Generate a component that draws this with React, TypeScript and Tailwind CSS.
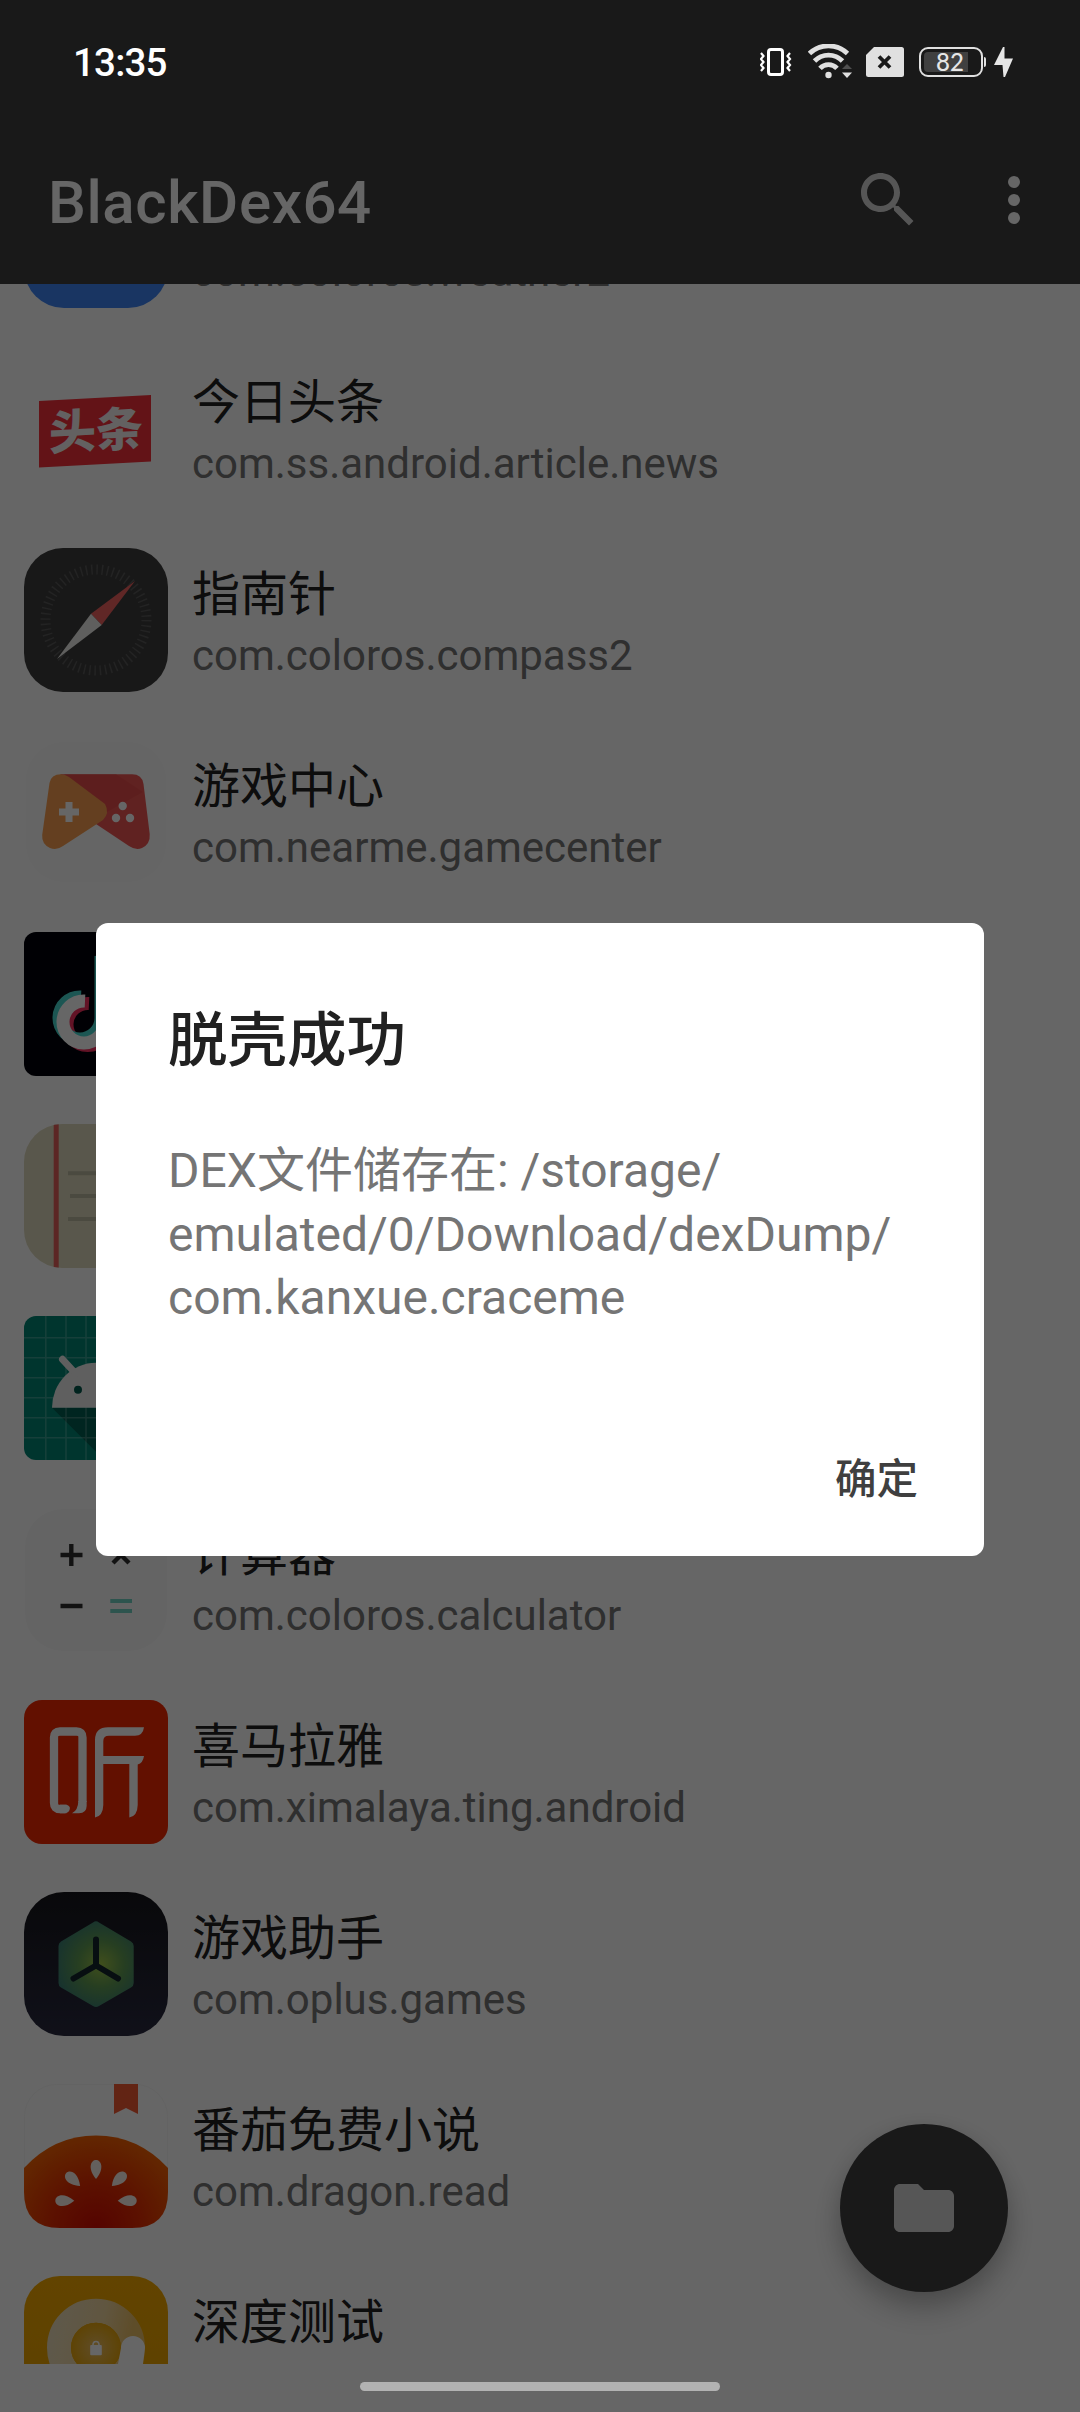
import type { ReactNode } from "react";

const iconClass = "block size-36 shrink-0";

function WeatherIcon() {
  return (
    <svg viewBox="0 0 144 144" className={iconClass}>
      <rect width="144" height="144" rx="40" fill="#4086f5" />
    </svg>
  );
}

function ToutiaoIcon() {
  return (
    <svg viewBox="0 0 144 144" className={iconClass}>
      <path d="M15 45 127 39V105.500L15 111.500Z" fill="#f8303a" />
      <text
        x="72"
        y="91.500"
        textAnchor="middle"
        transform="translate(0 3.800) skewY(-3)"
        className="font-['Noto_Sans_CJK_SC',sans-serif] text-[47px] font-black"
        fill="#f8f2f2"
      >
        头条
      </text>
    </svg>
  );
}

function CompassIcon() {
  return (
    <svg viewBox="0 0 144 144" className={iconClass}>
      <rect width="144" height="144" rx="39" fill="#3d3d3d" />
      <circle cx="72" cy="72" r="50.500" fill="none" stroke="#585858" strokeWidth="10" strokeDasharray="1.500 3.788" />
      <path d="M111 33 67 65.700 77.700 77Z" fill="#f06260" />
      <path d="M33 111 67 65.700 77.700 77Z" fill="#eeeeea" />
    </svg>
  );
}

function GameCenterIcon() {
  return (
    <svg viewBox="0 0 144 144" className={iconClass}>
      <rect x="2" y="2" width="140" height="140" rx="38" fill="#fcfcfc" />
      <path
        d="M37 34.300H108Q118 34.300 119.500 44L125.700 94Q126.500 104 118 108Q111.500 110.500 105 106L72 84 30 40Z"
        fill="#f05654"
      />
      <path d="M40 34.300H92L119 52 83 72Z" fill="#e44744" opacity=".55" />
      <path
        d="M37 34.300Q27 34.500 25.500 43L18.200 95Q17.500 104 26 108Q33 110.500 39 106L79 80Q86 73 81 64L45 37Q41 34.300 37 34.300Z"
        fill="#fa9f50"
      />
      <path d="M35 72H55M45 62V82" stroke="#fff" strokeWidth="7" />
      <circle cx="98.700" cy="66" r="4.200" fill="#fff" />
      <circle cx="92" cy="78" r="4.200" fill="#fff" />
      <circle cx="106" cy="78" r="4.200" fill="#fff" />
    </svg>
  );
}

function TiktokIcon() {
  const note = "M61 69A21 21 0 1 0 81 90V28Q84 46 106 50";
  return (
    <svg viewBox="0 0 144 144" className={iconClass}>
      <rect width="144" height="144" rx="12" fill="#02020a" />
      <g fill="none" strokeWidth="13">
        <path d={note} stroke="#f5305f" transform="translate(4 2.500)" />
        <path d={note} stroke="#48d8cf" transform="translate(-4 -4)" />
        <path d={note} stroke="#fff" />
      </g>
    </svg>
  );
}

function NotesIcon() {
  return (
    <svg viewBox="0 0 144 144" className={iconClass}>
      <defs>
        <clipPath id="notes-clip">
          <rect width="144" height="144" rx="38" />
        </clipPath>
      </defs>
      <g clipPath="url(#notes-clip)">
        <rect width="144" height="144" fill="#dfdabd" />
        <rect x="29.700" width="5" height="144" fill="#e5605a" />
        <path d="M44 49.300H112M46 72H112M44 95H112" stroke="#bcb8a0" strokeWidth="4" />
      </g>
    </svg>
  );
}

function AndroidIcon() {
  return (
    <svg viewBox="0 0 144 144" className={iconClass}>
      <defs>
        <clipPath id="android-clip">
          <rect width="144" height="144" rx="12" />
        </clipPath>
      </defs>
      <g clipPath="url(#android-clip)">
        <rect width="144" height="144" fill="#008573" />
        <path d="M28 91.700 80.300 144H144V119L116 91.700Z" fill="#005c50" />
        <path
          d="M21.800 0V144M42 0V144M62 0V144M82 0V144M102 0V144M122 0V144M0 21.700H144M0 41.700H144M0 61.700H144M0 81.700H144M0 101.700H144M0 121.700H144"
          stroke="#fff"
          strokeOpacity=".22"
          strokeWidth="1.500"
        />
        <path d="M28 91.700A44 45 0 0 1 116 91.700Z" fill="#ededed" />
        <path d="M38.500 43.300 52 58M105.500 43.300 92 58" stroke="#ededed" strokeWidth="7" strokeLinecap="round" />
        <circle cx="54" cy="73.700" r="4" fill="#00574b" />
        <circle cx="90" cy="73.700" r="4" fill="#00574b" />
      </g>
    </svg>
  );
}

function CalculatorIcon() {
  return (
    <svg viewBox="0 0 144 144" className={iconClass}>
      <rect x="1" y="1" width="142" height="142" rx="38" fill="#fbfbfb" />
      <path d="M36.500 47H58.500M47.300 36V58M36.500 98H58.500" stroke="#2e2e2e" strokeWidth="4.400" />
      <path d="M89 39 105 55M105 39 89 55" stroke="#2e2e2e" strokeWidth="4.400" />
      <path d="M86.300 93H108M86.300 103H108" stroke="#70d2c4" strokeWidth="4" />
    </svg>
  );
}

function XimalayaIcon() {
  return (
    <svg viewBox="0 0 144 144" className={iconClass}>
      <rect width="144" height="144" rx="18" fill="#f52800" />
      <path
        d="M42.500 109H36Q30 109 30 103V37.500Q30 31.500 36 31.500H52.500Q58.500 31.500 58.500 37.500V102"
        fill="none"
        stroke="#fff"
        strokeWidth="8.300"
      />
      <path d="M36 104.800H42.500Q46.500 106 45.800 109Q45 113 41 113.200H36Z" fill="#fff" />
      <path d="M54.350 101H62.650V106Q62.500 113.300 55 113.300H48Q54 110.500 54.350 101Z" fill="#fff" />
      <path
        d="M71 117.600V40Q71 27.300 84 27.300H120Q119 35.700 111 35.700H85Q79.300 35.700 79.300 41V56H120Q119 63 113.700 64.500V105Q113.500 116 105.300 117.600V64H79.300V105Q79 116 71 117.600Z"
        fill="#fff"
      />
    </svg>
  );
}

function GameAssistantIcon() {
  return (
    <svg viewBox="0 0 144 144" className={iconClass}>
      <defs>
        <linearGradient id="assist-bg" x2="0" y2="1">
          <stop stopColor="#16161b" />
          <stop offset="1" stopColor="#292a40" />
        </linearGradient>
        <radialGradient id="assist-hex" gradientUnits="userSpaceOnUse" cx="77" cy="72" r="46">
          <stop stopColor="#a0c448" />
          <stop offset=".5" stopColor="#609c54" />
          <stop offset="1" stopColor="#3c8074" />
        </radialGradient>
      </defs>
      <rect width="144" height="144" rx="40" fill="url(#assist-bg)" />
      <path
        d="M69 30.500Q72 28 75 30.500L107 49.500Q109.700 51 109.700 54V91Q109.700 94 107 95.500L75 114Q72 115.800 69 114L37 95.500Q34.500 94 34.500 91V54Q34.500 51 37 49.500Z"
        fill="url(#assist-hex)"
      />
      <path
        d="M72 47.500V73.500L49.500 86.500M72 73.500 94 86.500"
        fill="none"
        stroke="#12232c"
        strokeWidth="6"
        strokeLinecap="round"
        strokeLinejoin="round"
      />
    </svg>
  );
}

function TomatoIcon() {
  return (
    <svg viewBox="0 0 144 144" className={iconClass}>
      <defs>
        <radialGradient id="tomato-fill" gradientUnits="userSpaceOnUse" cx="72" cy="144" r="100">
          <stop stopColor="#d40a00" />
          <stop offset=".45" stopColor="#e52c00" />
          <stop offset="1" stopColor="#f96a04" />
        </radialGradient>
      </defs>
      <rect x=".5" y=".5" width="143" height="143" rx="32" fill="#fff" stroke="#f8f8f8" />
      <path d="M90 0H114V30L102 24 90 30Z" fill="#f65a34" />
      <path d="M0 84Q30 51.500 72 51.500T144 84V108Q144 144 108 144H36Q0 144 0 108Z" fill="url(#tomato-fill)" />
      <g fill="#faf0e8">
        {[-90, -47, 0, 47, 90].map((angle) => (
          <path key={angle} d="M72 95C63 84 67 76 72 76S81 84 72 95Z" transform={`rotate(${angle} 72 116.700)`} />
        ))}
      </g>
    </svg>
  );
}

function TestIcon() {
  return (
    <svg viewBox="0 0 144 144" className={iconClass}>
      <defs>
        <linearGradient id="test-ring" x2="1" y2=".2">
          <stop stopColor="#ecdcb8" />
          <stop offset=".6" stopColor="#f0d7a0" />
          <stop offset="1" stopColor="#ecc068" />
        </linearGradient>
        <radialGradient id="test-core">
          <stop stopColor="#eec066" />
          <stop offset="1" stopColor="#eba80c" />
        </radialGradient>
        <linearGradient id="test-bg" x2="0" y2="1">
          <stop stopColor="#f5aa00" />
          <stop offset="1" stopColor="#e8a200" />
        </linearGradient>
      </defs>
      <rect width="144" height="144" rx="36" fill="url(#test-bg)" />
      <circle cx="72" cy="71.700" r="37" fill="none" stroke="url(#test-ring)" strokeWidth="24" />
      <circle cx="72" cy="71.700" r="25" fill="url(#test-core)" />
      <path d="M97 72A12 12 0 0 1 121 72L119 88H94Z" fill="#fff" />
      <rect x="66.200" y="69" width="11.600" height="10.200" rx="1" fill="#fff" />
      <path d="M69 69A3 3.500 0 0 1 75 69" fill="none" stroke="#fff" strokeWidth="1.600" />
    </svg>
  );
}

const apps: { name: string; pkg: string; icon: ReactNode }[] = [
  { name: "天气", pkg: "com.coloros.weather2", icon: <WeatherIcon /> },
  { name: "今日头条", pkg: "com.ss.android.article.news", icon: <ToutiaoIcon /> },
  { name: "指南针", pkg: "com.coloros.compass2", icon: <CompassIcon /> },
  { name: "游戏中心", pkg: "com.nearme.gamecenter", icon: <GameCenterIcon /> },
  { name: "抖音", pkg: "com.ss.android.ugc.aweme", icon: <TiktokIcon /> },
  { name: "便签", pkg: "com.coloros.note", icon: <NotesIcon /> },
  { name: "craceme", pkg: "com.kanxue.craceme", icon: <AndroidIcon /> },
  { name: "计算器", pkg: "com.coloros.calculator", icon: <CalculatorIcon /> },
  { name: "喜马拉雅", pkg: "com.ximalaya.ting.android", icon: <XimalayaIcon /> },
  { name: "游戏助手", pkg: "com.oplus.games", icon: <GameAssistantIcon /> },
  { name: "番茄免费小说", pkg: "com.dragon.read", icon: <TomatoIcon /> },
  { name: "深度测试", pkg: "com.coloros.deeptesting", icon: <TestIcon /> },
];

function AppRow({ name, pkg, icon }: { name: string; pkg: string; icon: ReactNode }) {
  return (
    <li className="flex h-48 shrink-0 items-center gap-6 px-6">
      {icon}
      <div className="flex h-36 flex-col whitespace-nowrap pt-[15px]">
        <span className="h-16 text-[48px] leading-16 text-[#212121]">{name}</span>
        <span className="h-14 text-[42px] leading-[57px] text-[#757575]">{pkg}</span>
      </div>
    </li>
  );
}

function AppBar() {
  return (
    <header className="flex h-[284px] shrink-0 items-center bg-[#3f3f3f] pt-[116px] pr-[30px] pl-12">
      <h1 className="flex-1 pt-[5px] text-[60px] leading-none font-medium tracking-[0.6px] text-white">BlackDex64</h1>
      <svg viewBox="0 0 24 24" className="mr-[54px] size-[72px]" fill="#d8d8d8">
        <path d="M15.500 14h-.79l-.28-.27C15.410 12.590 16 11.110 16 9.500 16 5.910 13.090 3 9.500 3S3 5.910 3 9.500 5.910 16 9.500 16c1.610 0 3.090-.59 4.230-1.570l.27.280v.790l5 4.990L20.490 19l-4.990-5zm-6 0C7.010 14 5 11.990 5 9.500S7.010 5 9.500 5 14 7.010 14 9.500 11.990 14 9.500 14z" />
      </svg>
      <svg viewBox="0 0 24 24" className="size-[72px]" fill="#fff">
        <circle cx="12" cy="6" r="2" />
        <circle cx="12" cy="12" r="2" />
        <circle cx="12" cy="18" r="2" />
      </svg>
    </header>
  );
}

function StatusBar() {
  return (
    <div className="flex h-[116px] shrink-0 items-start pl-[73px] pr-[66px]">
      <span className="mt-[41px] flex-1 text-[38.500px] leading-[44px] font-medium tracking-[-0.800px] text-white">13:35</span>
      <svg viewBox="0 0 32 34" className="mt-11 h-[34px] w-8" fill="none" stroke="#fff">
        <rect x="8.500" y="5.500" width="14" height="25" rx="2.500" strokeWidth="3" />
        <path d="M1 9 3.500 12 1 15 3.500 18 1 21 3.500 24 1 27M30 9 27.500 12 30 15 27.500 18 30 21 27.500 24 30 27" strokeWidth="2.200" />
      </svg>
      <svg viewBox="0 0 45 35" className="mt-11 ml-4 h-[35px] w-[45px]" fill="none">
        <g stroke="#e0e0e0" strokeWidth="4.800">
          <path d="M1.500 10.300A27.500 27.500 0 0 1 39.500 10.300" transform="translate(0 -.8)" />
          <path d="M6.500 17A19.500 19.500 0 0 1 34.500 17" />
          <path d="M12 24.300A11.500 11.500 0 0 1 29 24.300" />
        </g>
        <circle cx="20.500" cy="31" r="3.200" fill="#e0e0e0" />
        <path d="M34 25 39 20 44 25Z" fill="#505050" />
        <path d="M34 28.500H44L39 34Z" fill="#e0e0e0" />
      </svg>
      <svg viewBox="0 0 38 30" className="mt-[47px] ml-[13px] h-[30px] w-[38px]">
        <path d="M8 0H35.500Q38 0 38 2.500V27.500Q38 30 35.500 30H2.500Q0 30 0 27.500V8Z" fill="#e0e0e0" />
        <path d="M13 9.500 24 20.500M24 9.500 13 20.500" stroke="#191919" strokeWidth="3.800" />
      </svg>
      <div className="mt-[47px] ml-[15px] flex h-[30px] items-center gap-px">
        <div className="relative flex h-[30px] w-16 items-center justify-center rounded-[9px] border-2 border-[#e0e0e0]">
          <div className="absolute inset-y-[3px] left-[3px] w-[44px] rounded-l-[4px] bg-[#404040]" />
          <span className="relative -ml-0.5 font-[Lato,sans-serif] text-[24px] leading-none font-medium text-[#e6e6e6]">82</span>
        </div>
        <div className="h-2.5 w-[2px] rounded-r bg-[#e0e0e0]" />
      </div>
      <svg viewBox="0 0 20 30" className="mt-[47px] ml-[8px] h-[30px] w-5" fill="#e6e6e6">
        <path d="M9 0 0 18H8.500L9.500 30H11L19 11.500H10.500V0Z" />
      </svg>
    </div>
  );
}

function Dialog() {
  return (
    <section className="mx-24 mt-[807px] flex h-[633px] shrink-0 flex-col rounded-xl bg-white px-[72px]">
      <h2 className="mt-[78px] h-20 text-[59.500px] leading-20 font-medium text-[#212121]">脱壳成功</h2>
      <p className="mt-[58px] text-[48px] leading-16 whitespace-nowrap text-[#757575]">
        <span className="block h-16">DEX文件储存在: /storage/</span>
        <span className="block h-[63px]">emulated/0/Download/dexDump/</span>
        <span className="block h-16">com.kanxue.craceme</span>
      </p>
      <button className="mt-[122px] -mr-1.5 h-14 self-end text-[41.500px] leading-14 font-medium text-[#3f3f3f]">确定</button>
    </section>
  );
}

export default function App() {
  return (
    <main className="relative flex h-[2412px] w-[1080px] flex-col overflow-hidden bg-white font-[Roboto,'Noto_Sans_CJK_SC',sans-serif]">
      <AppBar />
      <div className="h-[2080px] shrink-0 overflow-hidden">
        <ul className="-mt-36 flex flex-col">
          {apps.map((app) => (
            <AppRow key={app.pkg} {...app} />
          ))}
        </ul>
      </div>
      <button className="absolute right-18 bottom-[120px] flex size-[168px] items-center justify-center rounded-full bg-[#3f3f3f] shadow-[0_18px_30px_rgba(0,0,0,0.22),0_4px_22px_rgba(0,0,0,0.10)]">
        <svg viewBox="0 0 24 24" className="size-[72px]" fill="#d8d8d8">
          <path d="M10 4H4c-1.100 0-1.990.9-1.990 2L2 18c0 1.100.9 2 2 2h16c1.100 0 2-.9 2-2V8c0-1.100-.9-2-2-2h-8l-2-2z" />
        </svg>
      </button>
      <div className="absolute inset-0 flex flex-col bg-black/60">
        <StatusBar />
        <Dialog />
        <div className="mx-auto mt-auto mb-[21px] h-[9px] w-[360px] rounded-full bg-[#b2b2b2]" />
      </div>
    </main>
  );
}
